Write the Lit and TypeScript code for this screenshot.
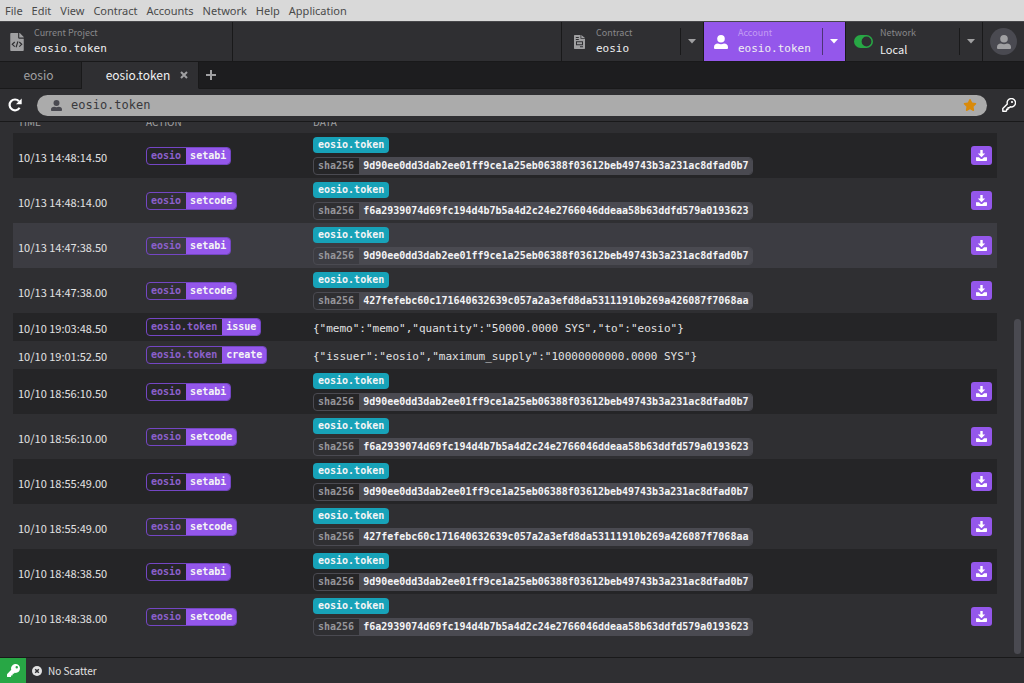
import { LitElement, html, css, svg, nothing } from "lit";
import { customElement, state, property } from "lit/decorators.js";
import { classMap } from "lit/directives/class-map.js";

interface Row {
  time: string;
  contract: string;
  action: string;
  hash?: string;
  json?: string;
}

const ABI = "9d90ee0dd3dab2ee01ff9ce1a25eb06388f03612beb49743b3a231ac8dfad0b7";
const CODE_A = "f6a2939074d69fc194d4b7b5a4d2c24e2766046ddeaa58b63ddfd579a0193623";
const CODE_B = "427fefebc60c171640632639c057a2a3efd8da53111910b269a426087f7068aa";

const ROWS: Row[] = [
  { time: "10/13 14:48:14.50", contract: "eosio", action: "setabi", hash: ABI },
  { time: "10/13 14:48:14.00", contract: "eosio", action: "setcode", hash: CODE_A },
  { time: "10/13 14:47:38.50", contract: "eosio", action: "setabi", hash: ABI },
  { time: "10/13 14:47:38.00", contract: "eosio", action: "setcode", hash: CODE_B },
  {
    time: "10/10 19:03:48.50",
    contract: "eosio.token",
    action: "issue",
    json: '{"memo":"memo","quantity":"50000.0000 SYS","to":"eosio"}',
  },
  {
    time: "10/10 19:01:52.50",
    contract: "eosio.token",
    action: "create",
    json: '{"issuer":"eosio","maximum_supply":"10000000000.0000 SYS"}',
  },
  { time: "10/10 18:56:10.50", contract: "eosio", action: "setabi", hash: ABI },
  { time: "10/10 18:56:10.00", contract: "eosio", action: "setcode", hash: CODE_A },
  { time: "10/10 18:55:49.00", contract: "eosio", action: "setabi", hash: ABI },
  { time: "10/10 18:55:49.00", contract: "eosio", action: "setcode", hash: CODE_B },
  { time: "10/10 18:48:38.50", contract: "eosio", action: "setabi", hash: ABI },
  { time: "10/10 18:48:38.00", contract: "eosio", action: "setcode", hash: CODE_A },
];

const icon = (box: string, w: number, h: number, body: unknown) =>
  html`<svg viewBox=${box} width=${w} height=${h} fill="currentColor" aria-hidden="true">${body}</svg>`;

const userIcon = (size: number) =>
  icon("0 0 14 14", size, size, svg`
    <circle cx="7" cy="3.8" r="3.8"/>
    <path d="M0 12.2C0 9.8 1.6 8.6 4 8.6C5 9 6 9.200 7 9.200S9 9 10 8.600C12.400 8.600 14 9.800 14 12.200V13A1 1 0 0 1 13 14H1A1 1 0 0 1 0 13Z"/>`);

const fileCodeIcon = icon("0 0 384 512", 14, 18, svg`
  <path d="M384 121.900V128H256V0h6.100c6.400 0 12.500 2.500 17 7l97.900 98c4.500 4.500 7 10.600 7 16.900zM248 160c-13.200 0-24-10.800-24-24V0H24C10.700 0 0 10.700 0 24v464c0 13.300 10.700 24 24 24h336c13.300 0 24-10.700 24-24V160z"/>
  <path d="M128 256l-70 66 70 66M256 256l70 66-70 66M218 240l-52 164" fill="none" stroke="#2f2f32" stroke-width="34"/>`);

const contractIcon = icon("0 0 11 14", 11, 14, svg`
  <path fill-rule="evenodd" d="M.7 0H6.500v3.800H11v9.500a.7.7 0 0 1-.7.7H.7a.7.7 0 0 1-.7-.7V.7A.7.7 0 0 1 .7 0zM1.800 2v1h3V2zM1.800 4v1h3V4zM2 6.300v3.900h7V6.300zM3 7.300h5v1.900H3zM6 11.300v1h3v-1z"/>
  <path d="M7.300 0L11 3H7.300z"/>`);

const toggleIcon = icon("0 0 19 13", 19, 13, svg`
  <path fill-rule="evenodd" d="M6.500 0h6a6.500 6.500 0 0 1 0 13h-6a6.500 6.500 0 0 1 0-13zM12.500 1.600a4.900 4.900 0 1 0 0 9.800 4.900 4.900 0 0 0 0-9.800z"/>`);

const caretIcon = icon("0 0 8 5", 8, 5, svg`<path d="M0 0h8L4 4.600z"/>`);

const refreshIcon = icon("0 0 14 14", 14, 14, svg`
  <path d="M11.600 9.700A5.400 5.400 0 1 1 11 3.300" fill="none" stroke="currentColor" stroke-width="2.200"/>
  <path d="M13.700.6v5.300a.4.4 0 0 1-.4.4H8z"/>`);

const starIcon = icon("0 0 576 512", 14, 12, svg`
  <path d="M259.300 17.800L194 150.200 47.900 171.500c-26.200 3.800-36.700 36.100-17.700 54.600l105.700 103-25 145.500c-4.500 26.300 23.200 46 46.400 33.700L288 439.600l130.700 68.700c23.200 12.200 50.900-7.400 46.400-33.700l-25-145.500 105.700-103c19-18.500 8.500-50.800-17.700-54.600L382 150.200 316.700 17.800c-11.700-23.600-45.600-23.900-57.400 0z"/>`);

const keyOutlineIcon = icon("0 0 14 14", 14, 14, svg`
  <path d="M5.300 5.900A4.200 4.200 0 1 1 8.300 8.800L7.300 9.800H6V11.200H4.600V12.700L4 13.300H.8V10.400z" fill="none" stroke="currentColor" stroke-width="1.400" stroke-linejoin="round"/>
  <circle cx="10" cy="4" r="1.100"/>`);

const keyIcon = icon("0 0 512 512", 13, 13, svg`
  <path d="M512 176c0 97.200-78.800 176-176 176-11.200 0-22.200-1.100-32.800-3.100l-24 27a24 24 0 0 1-17.900 8.100H224v40c0 13.300-10.700 24-24 24h-40v40c0 13.300-10.700 24-24 24H24c-13.300 0-24-10.700-24-24v-78.100c0-6.400 2.500-12.500 7-17l161.800-161.800A176 176 0 1 1 512 176zM336 128a48 48 0 1 0 96 0 48 48 0 1 0-96 0z"/>`);

const timesCircleIcon = icon("0 0 10 10", 10, 10, svg`
  <circle cx="5" cy="5" r="5"/>
  <path d="M3.200 3.200l3.600 3.600M6.800 3.200L3.200 6.800" stroke="#2f2f32" stroke-width="1.500"/>`);

const downloadIcon = icon("0 0 11 11", 11, 11, svg`
  <path d="M4.300 0h2.400v3.600h2.500L5.500 7.300 1.800 3.600h2.500z"/>
  <path d="M0 7.300h2.900l2 1.700h1.200l2-1.700H11v3a.7.7 0 0 1-.7.7H.7a.7.7 0 0 1-.7-.7z"/>`);

const closeIcon = icon("0 0 8 8", 8, 8, svg`<path d="M1 1l6 6M7 1L1 7" stroke="currentColor" stroke-width="2"/>`);
const plusIcon = icon("0 0 10 10", 10, 10, svg`<path d="M5 0v10M0 5h10" stroke="currentColor" stroke-width="2"/>`);

@customElement("split-tag")
export class SplitTag extends LitElement {
  @property() name = "";
  @property() value = "";
  @property() tone = "action";

  static styles = css`
    :host { display: block; }
    .tag {
      display: flex; width: max-content; box-sizing: border-box; height: 18px;
      border: 1px solid; border-radius: 4px; overflow: hidden;
      font: bold 10px/16px "DejaVu Sans Mono", monospace;
    }
    .name { padding: 0 5px 0 4px; }
    .value { padding: 0 4px; color: #f4f4f6; }
    .action { border-color: #7446c4; }
    .action .name { color: #8c60cc; }
    .action .value { background: #9457eb; }
    .hash { border-color: #4a4a51; }
    .hash .name { color: #96969a; }
    .hash .value { background: #4a4a51; }
  `;

  render() {
    return html`<div class="tag ${this.tone}">
      <span class="name">${this.name}</span><span class="value">${this.value}</span>
    </div>`;
  }
}

@customElement("app-root")
export class AppRoot extends LitElement {
  @state() private tab = "eosio.token";

  static styles = css`
    :host {
      display: flex; flex-direction: column; height: 100vh; overflow: hidden;
      background: #2f2f32; color: #e2e2e3;
      font: 12px/18px "Noto Sans CJK SC", sans-serif;
    }
    svg { display: block; flex: none; }
    button {
      display: flex; align-items: center; border: 0; margin: 0; padding: 0;
      background: none; color: inherit; font: inherit; text-align: left;
    }
    .mono { font-family: "DejaVu Sans Mono", monospace; }

    .menu {
      flex: none; display: flex; gap: 9px; height: 21px; padding: 0 5px;
      background: #d9d9d9; color: #4a4a4a;
    }
    .menu button { font: 11px/21px "Noto Sans", sans-serif; }

    .bar {
      flex: none; display: flex; height: 41px; box-sizing: border-box;
      border-top: 1px solid #47474a; border-bottom: 1px solid #19191a;
    }
    .cell { display: flex; align-items: center; border-right: 1px solid #19191a; box-sizing: border-box; }
    .project { width: 233px; gap: 10px; padding-left: 10px; color: #a0a0a2; }
    .spacer { flex: 1; }
    .pick { width: 142px; }
    .pick .main { flex: 1; height: 27px; border-right: 1px solid #19191a; }
    .pick .glyph { display: flex; justify-content: center; width: 34px; color: #a0a0a2; }
    .pick .drop { justify-content: center; width: 22px; height: 27px; color: #a0a0a2; }
    .account { background: #9457eb; }
    .account .main { border-color: #4d3477; }
    .account .glyph, .account .drop { color: #fff; }
    .account .label { color: #c39df3; }
    .network { width: 137px; }
    .pick.network .glyph { color: #28a745; }
    .text { display: flex; flex-direction: column; gap: 2px; padding-bottom: 2px; }
    .label { font-size: 9px; line-height: 14px; color: #88888a; }
    .title { font-size: 11px; line-height: 14px; color: #f0f0f1; }
    .avatar { width: 41px; justify-content: center; }
    .avatar span {
      display: flex; align-items: center; justify-content: center; width: 27px; height: 27px;
      border-radius: 50%; background: #4a4a51; color: #a0a0a2;
    }

    .tabs { flex: none; display: flex; height: 27px; background: #1d1d1f; }
    .tab {
      justify-content: center; box-sizing: border-box; border-right: 1px solid #19191a;
      border-bottom: 1px solid #19191a; background: #252527; color: #a0a0a2; width: 82px; padding-right: 4px;
    }
    .tab.on { background: #2f2f32; border-bottom-color: #2f2f32; color: #f0f0f1; width: 117px; gap: 10px; padding: 0 10px 0 24px; }
    .tab svg { color: #a0a0a2; }
    .fill { flex: 1; border-bottom: 1px solid #19191a; padding-left: 7px; display: flex; color: #a0a0a2; }

    .address {
      flex: none; display: flex; align-items: center; height: 33px; box-sizing: border-box;
      padding: 0 8px; gap: 15px; border-bottom: 1px solid #19191a; color: #fff;
    }
    .field {
      flex: 1; display: flex; align-items: center; gap: 9px; height: 21px; box-sizing: border-box;
      padding: 0 10px 0 14px; border-radius: 11px; background: #ababab; color: #4a4a51;
    }
    .field input {
      flex: 1; min-width: 0; border: 0; padding: 0; background: none; color: #39393d; outline: none;
      font: 12px/18px "DejaVu Sans Mono", monospace;
    }
    .star { color: #d98a0a; }

    .content { flex: 1; min-height: 0; display: flex; padding: 0 3px 0 13px; gap: 17px; }
    .scroll { flex: 1; overflow: hidden; }
    table { width: 100%; border-collapse: collapse; table-layout: fixed; margin-top: -8px; }
    th { height: 19px; padding: 0; font-size: 10px; line-height: 16px; font-weight: normal; color: #a0a0a2; text-align: left; vertical-align: top; }
    th:first-child, td:first-child { padding-left: 5px; }
    .c-time { width: 133px; }
    .c-action { width: 167px; }
    .c-get { width: 40px; }
    td { height: 45px; padding: 0; box-sizing: border-box; }
    .short td { height: 28px; }
    .time { padding-top: 2px; font-size: 11px; }
    .json { font-size: 11px; line-height: 18px; padding-top: 4px; white-space: nowrap; }
    tbody tr:nth-child(odd) { background: #252527; }
    tbody tr.hover { background: #3c3c42; }
    .data { display: flex; flex-direction: column; align-items: flex-start; gap: 4px; }
    .pill {
      padding: 0 5px; border-radius: 4px; background: #17a2b8; color: #f4f4f6;
      font: bold 10px/16px "DejaVu Sans Mono", monospace;
    }
    .get {
      justify-content: center; width: 21px; height: 19px; margin: 0 5px 0 auto;
      border-radius: 3px; background: #9457eb; color: #fff;
    }
    .track { flex: none; width: 7px; display: flex; flex-direction: column; justify-content: flex-end; padding-bottom: 3px; }
    .thumb { height: 63%; border-radius: 4px; background: #4a4a51; }

    .status { flex: none; display: flex; align-items: stretch; height: 26px; box-sizing: border-box; border-top: 1px solid #19191a; font-size: 10px; }
    .wallet { justify-content: center; width: 26px; background: #28a745; color: #fff; }
    .scatter { gap: 6px; padding-left: 6px; }
  `;

  private picker(kind: string, label: string, title: string, glyph: unknown) {
    return html`<div class="cell pick ${kind}">
      <button class="main">
        <span class="glyph">${glyph}</span>
        <span class="text">
          <span class="label">${label}</span>
          <span class=${classMap({ title: true, mono: kind !== "network" })}>${title}</span>
        </span>
      </button>
      <button class="drop" aria-label="${label} menu">${caretIcon}</button>
    </div>`;
  }

  private row(r: Row, i: number) {
    return html`<tr class=${classMap({ short: !!r.json, hover: i === 2 })}>
      <td><div class="time">${r.time}</div></td>
      <td><split-tag name=${r.contract} value=${r.action}></split-tag></td>
      <td>
        ${r.json
          ? html`<div class="json mono">${r.json}</div>`
          : html`<div class="data">
              <span class="pill">eosio.token</span>
              <split-tag tone="hash" name="sha256" value=${r.hash ?? ""}></split-tag>
            </div>`}
      </td>
      <td>${r.hash ? html`<button class="get" aria-label="Download">${downloadIcon}</button>` : nothing}</td>
    </tr>`;
  }

  render() {
    const menus = ["File", "Edit", "View", "Contract", "Accounts", "Network", "Help", "Application"];
    return html`
      <nav class="menu">${menus.map((m) => html`<button>${m}</button>`)}</nav>
      <header class="bar">
        <button class="cell project">
          ${fileCodeIcon}
          <span class="text"><span class="label">Current Project</span><span class="title mono">eosio.token</span></span>
        </button>
        <div class="cell spacer"></div>
        ${this.picker("contract", "Contract", "eosio", contractIcon)}
        ${this.picker("account", "Account", "eosio.token", userIcon(14))}
        ${this.picker("network", "Network", "Local", toggleIcon)}
        <button class="avatar" aria-label="Profile"><span>${userIcon(14)}</span></button>
      </header>
      <div class="tabs">
        ${["eosio", "eosio.token"].map(
          (t) => html`<button class=${classMap({ tab: true, on: t === this.tab })} @click=${() => (this.tab = t)}>
            ${t}${t === this.tab ? closeIcon : nothing}
          </button>`
        )}
        <div class="fill"><button aria-label="New tab">${plusIcon}</button></div>
      </div>
      <div class="address">
        <button aria-label="Refresh">${refreshIcon}</button>
        <label class="field">
          ${userIcon(11)}
          <input type="text" aria-label="Account name" .value=${"eosio.token"} />
          <button class="star" aria-label="Bookmark">${starIcon}</button>
        </label>
        <button aria-label="Keys">${keyOutlineIcon}</button>
      </div>
      <main class="content">
        <div class="scroll">
          <table>
            <colgroup><col class="c-time" /><col class="c-action" /><col /><col class="c-get" /></colgroup>
            <thead><tr><th>TIME</th><th>ACTION</th><th>DATA</th><th></th></tr></thead>
            <tbody>${ROWS.map((r, i) => this.row(r, i))}</tbody>
          </table>
        </div>
        <div class="track"><div class="thumb"></div></div>
      </main>
      <footer class="status">
        <button class="wallet" aria-label="Wallet">${keyIcon}</button>
        <button class="scatter">${timesCircleIcon}<span>No Scatter</span></button>
      </footer>
    `;
  }
}
